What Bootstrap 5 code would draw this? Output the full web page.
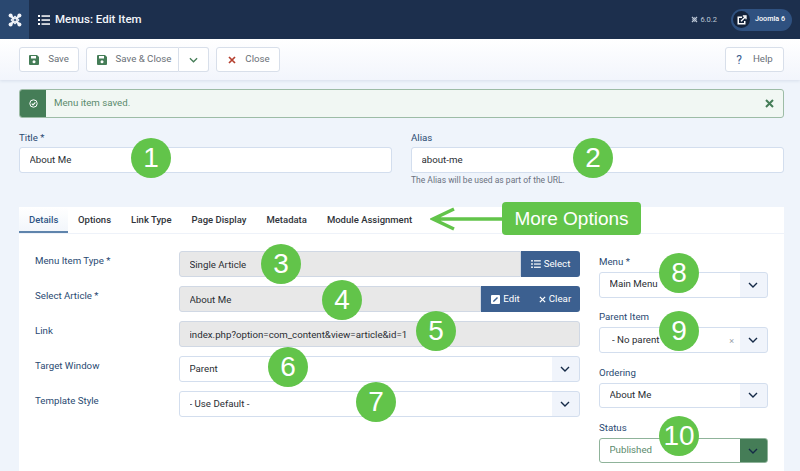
<!DOCTYPE html>
<html lang="en">
<head>
    <meta charset="UTF-8">
    <meta name="viewport" content="width=device-width, initial-scale=1.0">
    <title>Menus: Edit Item</title>
    <link href="https://cdn.jsdelivr.net/npm/bootstrap@5.3.3/dist/css/bootstrap.min.css" rel="stylesheet">
    <style>
        html, body { height: 471px; overflow: hidden; }
        body { background: #eff4fb; font-family: Roboto, "Liberation Sans", sans-serif; font-size: 9.7px; color: #22262a; position: relative; }
        .topbar { height: 39px; background: #1c2f4d; color: #fff; }
        .logoBox { width: 29px; height: 39px; background: #2a4870; }
        .listIcon { margin-left: 9px; }
        .pageTitle { font-size: 11.5px; font-weight: 500; margin-left: 5px; color: #f2f5fa; }
        .versionText { color: #bcc7d6; font-size: 7.5px; margin-right: 14px; gap: 2px; }
        .userPill { width: 61px; height: 22px; background: #2f5180; border-radius: 11px; margin-right: 8px; padding-left: 2px; font-size: 7.2px; font-weight: 500; }
        .userDot { width: 17px; height: 17px; border-radius: 50%; background: #14233b; margin-right: 5px; }
        .toolbar { height: 41px; padding: 8px 16px 8px 19px; background: linear-gradient(#fff, #f2f5fc); box-shadow: 0 1px 3px rgba(40,70,120,.12); }
        .toolBtn { height: 25px; background: #fff; border: 1px solid #d8dfea; border-radius: 3px; color: #6a7077; padding: 0; gap: 9px; --bs-btn-font-size: 9.7px; }
        .saveBtn { width: 60px; }
        .saveCloseBtn { width: 93px; border-radius: 3px 0 0 3px; padding-left: 3px; }
        .caretBtn { width: 30px; border-left: 0; border-radius: 0 3px 3px 0; }
        .closeBtn { width: 64px; margin-left: 7px; padding-left: 2px; }
        .helpBtn { width: 59px; gap: 11px; }
        .splitGroup { margin-left: 7px; }
        .helpMark { color: #3c6090; font-size: 12px; }
        .savedAlert { height: 29px; margin: 9px 16px 0 19px; background: #f1f7f3; border: 1px solid #9dbca6; border-radius: 3px; color: #5a8a6c; overflow: hidden; }
        .alertSide { width: 26px; height: 100%; background: #457d57; }
        .alertClose { margin-right: 9px; }
        .headFields { margin: 13px 16px 0 19px; gap: 19px; }
        .headField { width: 373px; }
        .fieldLabel { display: block; color: #2a4a72; line-height: 14px; margin: 0; }
        .plainInput { height: 25.5px; padding: 0 9.5px; font-size: 9.7px; color: #2a2e33; border: 1px solid #d3deee; border-radius: 3px; background-color: #fff; box-shadow: none; }
        .headField .plainInput { margin-top: 2px; }
        .hintText { color: #6b7280; font-size: 8.5px; line-height: 12px; margin-top: 1px; }
        .tabCard { position: absolute; left: 19px; top: 207px; width: 765px; bottom: 0; background: #fff; }
        .tabRow { height: 27px; border-bottom: 1px solid #eef2f9; }
        .tabItem { color: #30343a; font-size: 9.5px; font-weight: 500; padding: 0 10px; height: 26px; line-height: 25px; text-decoration: none; white-space: nowrap; }
        .tabItem.activeTab { color: #2f5586; background: linear-gradient(#fff, #f2f6fb); border-bottom: 2px solid #5f84ac; width: 49px; }
        .tabBody { padding: 17px 16px 0 16px; gap: 19px; }
        .mainCol { width: 545px; }
        .formLine { height: 26px; margin-bottom: 9px; }
        .lineLabel { width: 144px; color: #2a4a72; line-height: 14px; margin-top: 3px; flex: none; align-self: flex-start; }
        .formLine .plainInput { width: 401px; flex: none; }
        .joinedPair { width: 401px; }
        .plainInput[readonly] { background: #e8e8e8; border-color: #d0d8e4; }
        .formLine .typeInput { width: 342px; border-radius: 3px 0 0 3px; }
        .formLine .articleInput { width: 302px; border-radius: 3px 0 0 3px; }
        .fieldBtn { height: 25.5px; background: #3c6090; color: #fff; border: 0; border-radius: 0; font-size: 9.7px; padding: 0; display: flex; align-items: center; justify-content: center; gap: 3px; }
        .selectBtn { width: 59px; border-radius: 0 3px 3px 0; }
        .editBtn { width: 49px; }
        .clearBtn { width: 50px; border-radius: 0 3px 3px 0; }
        .selectBox { height: 25.5px; width: 100%; padding: 0 9.5px; font-size: 9.7px; color: #2a2e33; border: 1px solid #d3deee; border-radius: 3px; box-shadow: none;
            background-color: #fff;
            background-image: url("data:image/svg+xml,%3Csvg xmlns='http://www.w3.org/2000/svg' width='10' height='6' viewBox='0 0 10 6'%3E%3Cpath d='M1 1l4 4 4-4' fill='none' stroke='%23152a47' stroke-width='1.4'/%3E%3C/svg%3E"), linear-gradient(#f0f4fb, #f0f4fb);
            background-repeat: no-repeat; background-position: right 9px center, right top; background-size: 10px 6px, 27px 100%; }
        .formLine .selectBox { width: 401px; flex: none; }
        .sideCol { width: 169px; padding-top: 4px; }
        .sideField { margin-bottom: 12.8px; }
        .sideField .fieldLabel { margin-bottom: 3px; }
        .parentBox { padding-left: 12px; }
        .statusBox { color: #5a8a6c; border-color: #8fb39a;
            background-image: url("data:image/svg+xml,%3Csvg xmlns='http://www.w3.org/2000/svg' width='10' height='6' viewBox='0 0 10 6'%3E%3Cpath d='M1 1l4 4 4-4' fill='none' stroke='%23152a47' stroke-width='1.4'/%3E%3C/svg%3E"), linear-gradient(#457d57, #457d57); }
        .clearMark { position: absolute; right: 34px; top: 10px; color: #9aa1aa; font-size: 9px; line-height: 9px; }
        .noteDot { position: absolute; width: 40px; height: 40px; margin: -20px 0 0 -20px; border-radius: 50%; background: #62c44a; color: #fff; font-family: "Liberation Sans", sans-serif; font-size: 28px; line-height: 40px; text-align: center; }
        .noteLabel { position: absolute; left: 502px; top: 202px; width: 139px; height: 33px; background: #62c44a; color: #fff; border-radius: 4px; font-family: "Liberation Sans", sans-serif; font-size: 19px; line-height: 33px; text-align: center; }
        .noteArrow { position: absolute; left: 430px; top: 206px; }
    </style>
</head>
<body>
    <div class="topbar d-flex align-items-center">
        <div class="logoBox d-flex align-items-center justify-content-center">
            <svg width="14" height="14" viewBox="0 0 14 14" fill="none" stroke="#f2f5fa"><path d="M3 3l8 8M11 3l-8 8" stroke-width="2.2"/><circle cx="2.6" cy="2.6" r="2" fill="#f2f5fa" stroke="none"/><circle cx="11.4" cy="2.6" r="2" fill="#f2f5fa" stroke="none"/><circle cx="2.6" cy="11.4" r="2" fill="#f2f5fa" stroke="none"/><circle cx="11.4" cy="11.4" r="2" fill="#f2f5fa" stroke="none"/><path d="M7 3.4L10.6 7 7 10.6 3.4 7z" stroke-width="1.4"/><circle cx="7" cy="7" r="1.1" fill="#2a4870" stroke="none"/></svg>
        </div>
        <svg class="listIcon" width="12" height="10" viewBox="0 0 12 10" fill="#fff"><rect width="2" height="2"/><rect y="4" width="2" height="2"/><rect y="8" width="2" height="2"/><rect x="3.5" y=".3" width="8.5" height="1.5"/><rect x="3.5" y="4.3" width="8.5" height="1.5"/><rect x="3.5" y="8.3" width="8.5" height="1.5"/></svg>
        <span class="pageTitle">Menus: Edit Item</span>
        <div class="ms-auto d-flex align-items-center">
            <span class="versionText d-flex align-items-center">
                <svg width="7" height="7" viewBox="0 0 14 14" fill="none" stroke="#bcc7d6" stroke-width="2.6"><path d="M2 2l10 10M12 2L2 12"/><path d="M7 3L11 7 7 11 3 7z" stroke-width="1.6"/></svg>
                6.0.2
            </span>
            <div class="userPill d-flex align-items-center">
                <span class="userDot d-flex align-items-center justify-content-center">
                    <svg width="10" height="10" viewBox="0 0 10 10"><path d="M0.5 1.5h4.5v1.5H2v5h5V6h1.5v3.5h-8z" fill="#fff"/><path d="M4 6.2L8.2 2M5.8 1h3.2v3.2" fill="none" stroke="#fff" stroke-width="1.3"/></svg>
                </span>
                Joomla 6
            </div>
        </div>
    </div>

    <div class="toolbar d-flex">
        <button class="btn toolBtn saveBtn d-flex align-items-center justify-content-center" type="button">
            <svg width="10" height="10" viewBox="0 0 10 10"><path d="M0 1a1 1 0 0 1 1-1h7l2 2v7a1 1 0 0 1-1 1H1a1 1 0 0 1-1-1z" fill="#457d57"/><rect x="2" y="1" width="5" height="2.5" fill="#fff"/><circle cx="5" cy="6.8" r="1.5" fill="#fff"/></svg>
            Save
        </button>
        <div class="d-flex splitGroup">
            <button class="btn toolBtn saveCloseBtn d-flex align-items-center justify-content-center" type="button">
                <svg width="10" height="10" viewBox="0 0 10 10"><path d="M0 1a1 1 0 0 1 1-1h7l2 2v7a1 1 0 0 1-1 1H1a1 1 0 0 1-1-1z" fill="#457d57"/><rect x="2" y="1" width="5" height="2.5" fill="#fff"/><circle cx="5" cy="6.8" r="1.5" fill="#fff"/></svg>
                Save &amp; Close
            </button>
            <button class="btn toolBtn caretBtn d-flex align-items-center justify-content-center" type="button" aria-label="More">
                <svg width="9" height="6" viewBox="0 0 10 6"><path d="M1 1l4 4 4-4" fill="none" stroke="#457d57" stroke-width="1.4"/></svg>
            </button>
        </div>
        <button class="btn toolBtn closeBtn d-flex align-items-center justify-content-center" type="button">
            <svg width="8" height="8" viewBox="0 0 8 8"><path d="M1 1l6 6M7 1L1 7" stroke="#b5402f" stroke-width="1.7"/></svg>
            Close
        </button>
        <button class="btn toolBtn helpBtn ms-auto d-flex align-items-center justify-content-center" type="button">
            <span class="helpMark">?</span>
            Help
        </button>
    </div>

    <div class="savedAlert d-flex align-items-center">
        <div class="alertSide d-flex align-items-center justify-content-center">
            <svg width="9" height="9" viewBox="0 0 9 9" fill="none" stroke="#fff"><circle cx="4.5" cy="4.5" r="3.7"/><path d="M2.7 4.6l1.3 1.3 2.4-2.6" stroke-width="1.1"/></svg>
        </div>
        <span class="ms-2">Menu item saved.</span>
        <svg class="ms-auto alertClose" width="9" height="9" viewBox="0 0 9 9"><path d="M1 1l7 7M8 1L1 8" stroke="#457d57" stroke-width="2"/></svg>
    </div>

    <div class="headFields d-flex">
        <div class="headField">
            <label class="fieldLabel">Title *</label>
            <input class="form-control plainInput" type="text" value="About Me">
        </div>
        <div class="headField">
            <label class="fieldLabel">Alias</label>
            <input class="form-control plainInput" type="text" value="about-me">
            <div class="hintText">The Alias will be used as part of the URL.</div>
        </div>
    </div>

    <div class="tabCard">
        <div class="tabRow d-flex">
            <a class="tabItem activeTab" href="#">Details</a>
            <a class="tabItem" href="#">Options</a>
            <a class="tabItem" href="#">Link Type</a>
            <a class="tabItem" href="#">Page Display</a>
            <a class="tabItem" href="#">Metadata</a>
            <a class="tabItem" href="#">Module Assignment</a>
        </div>
        <div class="tabBody d-flex">
            <div class="mainCol">
                <div class="formLine d-flex align-items-center">
                    <label class="lineLabel">Menu Item Type *</label>
                    <div class="d-flex joinedPair">
                        <input class="form-control plainInput typeInput" type="text" value="Single Article" readonly>
                        <button class="fieldBtn selectBtn" type="button">
                            <svg width="10" height="8" viewBox="0 0 12 10" fill="#fff"><rect width="2" height="2"/><rect y="4" width="2" height="2"/><rect y="8" width="2" height="2"/><rect x="3.5" y=".3" width="8.5" height="1.5"/><rect x="3.5" y="4.3" width="8.5" height="1.5"/><rect x="3.5" y="8.3" width="8.5" height="1.5"/></svg>
                            Select
                        </button>
                    </div>
                </div>
                <div class="formLine d-flex align-items-center">
                    <label class="lineLabel">Select Article *</label>
                    <div class="d-flex joinedPair">
                        <input class="form-control plainInput articleInput" type="text" value="About Me" readonly>
                        <button class="fieldBtn editBtn" type="button">
                            <svg width="9" height="9" viewBox="0 0 9 9"><rect width="9" height="9" rx="1" fill="#fff"/><path d="M2 7l.4-1.6L6 2l1 1-3.5 3.6z" fill="#3c6090"/></svg>
                            Edit
                        </button>
                        <button class="fieldBtn clearBtn" type="button">
                            <svg width="7" height="7" viewBox="0 0 8 8"><path d="M1 1l6 6M7 1L1 7" stroke="#fff" stroke-width="1.5"/></svg>
                            Clear
                        </button>
                    </div>
                </div>
                <div class="formLine d-flex align-items-center">
                    <label class="lineLabel">Link</label>
                    <input class="form-control plainInput" type="text" value="index.php?option=com_content&amp;view=article&amp;id=1" readonly>
                </div>
                <div class="formLine d-flex align-items-center">
                    <label class="lineLabel">Target Window</label>
                    <select class="form-select selectBox"><option>Parent</option></select>
                </div>
                <div class="formLine d-flex align-items-center">
                    <label class="lineLabel">Template Style</label>
                    <select class="form-select selectBox"><option>- Use Default -</option></select>
                </div>
            </div>
            <div class="sideCol">
                <div class="sideField">
                    <label class="fieldLabel">Menu *</label>
                    <select class="form-select selectBox"><option>Main Menu</option></select>
                </div>
                <div class="sideField">
                    <label class="fieldLabel">Parent Item</label>
                    <div class="position-relative">
                        <select class="form-select selectBox parentBox"><option>- No parent -</option></select>
                        <span class="clearMark">×</span>
                    </div>
                </div>
                <div class="sideField">
                    <label class="fieldLabel">Ordering</label>
                    <select class="form-select selectBox"><option>About Me</option></select>
                </div>
                <div class="sideField">
                    <label class="fieldLabel">Status</label>
                    <select class="form-select selectBox statusBox"><option>Published</option></select>
                </div>
            </div>
        </div>
    </div>

    <div class="noteDot" style="left:151px;top:158px">1</div>
    <div class="noteDot" style="left:593px;top:158px">2</div>
    <div class="noteDot" style="left:281px;top:264px">3</div>
    <div class="noteDot" style="left:342px;top:300px">4</div>
    <div class="noteDot" style="left:436px;top:331px">5</div>
    <div class="noteDot" style="left:288px;top:367px">6</div>
    <div class="noteDot" style="left:376px;top:402px">7</div>
    <div class="noteDot" style="left:679px;top:273px">8</div>
    <div class="noteDot" style="left:679px;top:331px">9</div>
    <div class="noteDot" style="left:679px;top:436px">10</div>

    <svg class="noteArrow" width="74" height="26" viewBox="0 0 74 26" fill="none" stroke="#62c44a" stroke-width="3.4"><path d="M74 13H4M24 3L3 13l21 10"/></svg>
    <div class="noteLabel">More Options</div>

    <script src="https://cdn.jsdelivr.net/npm/bootstrap@5.3.3/dist/js/bootstrap.bundle.min.js"></script>
</body>
</html>
